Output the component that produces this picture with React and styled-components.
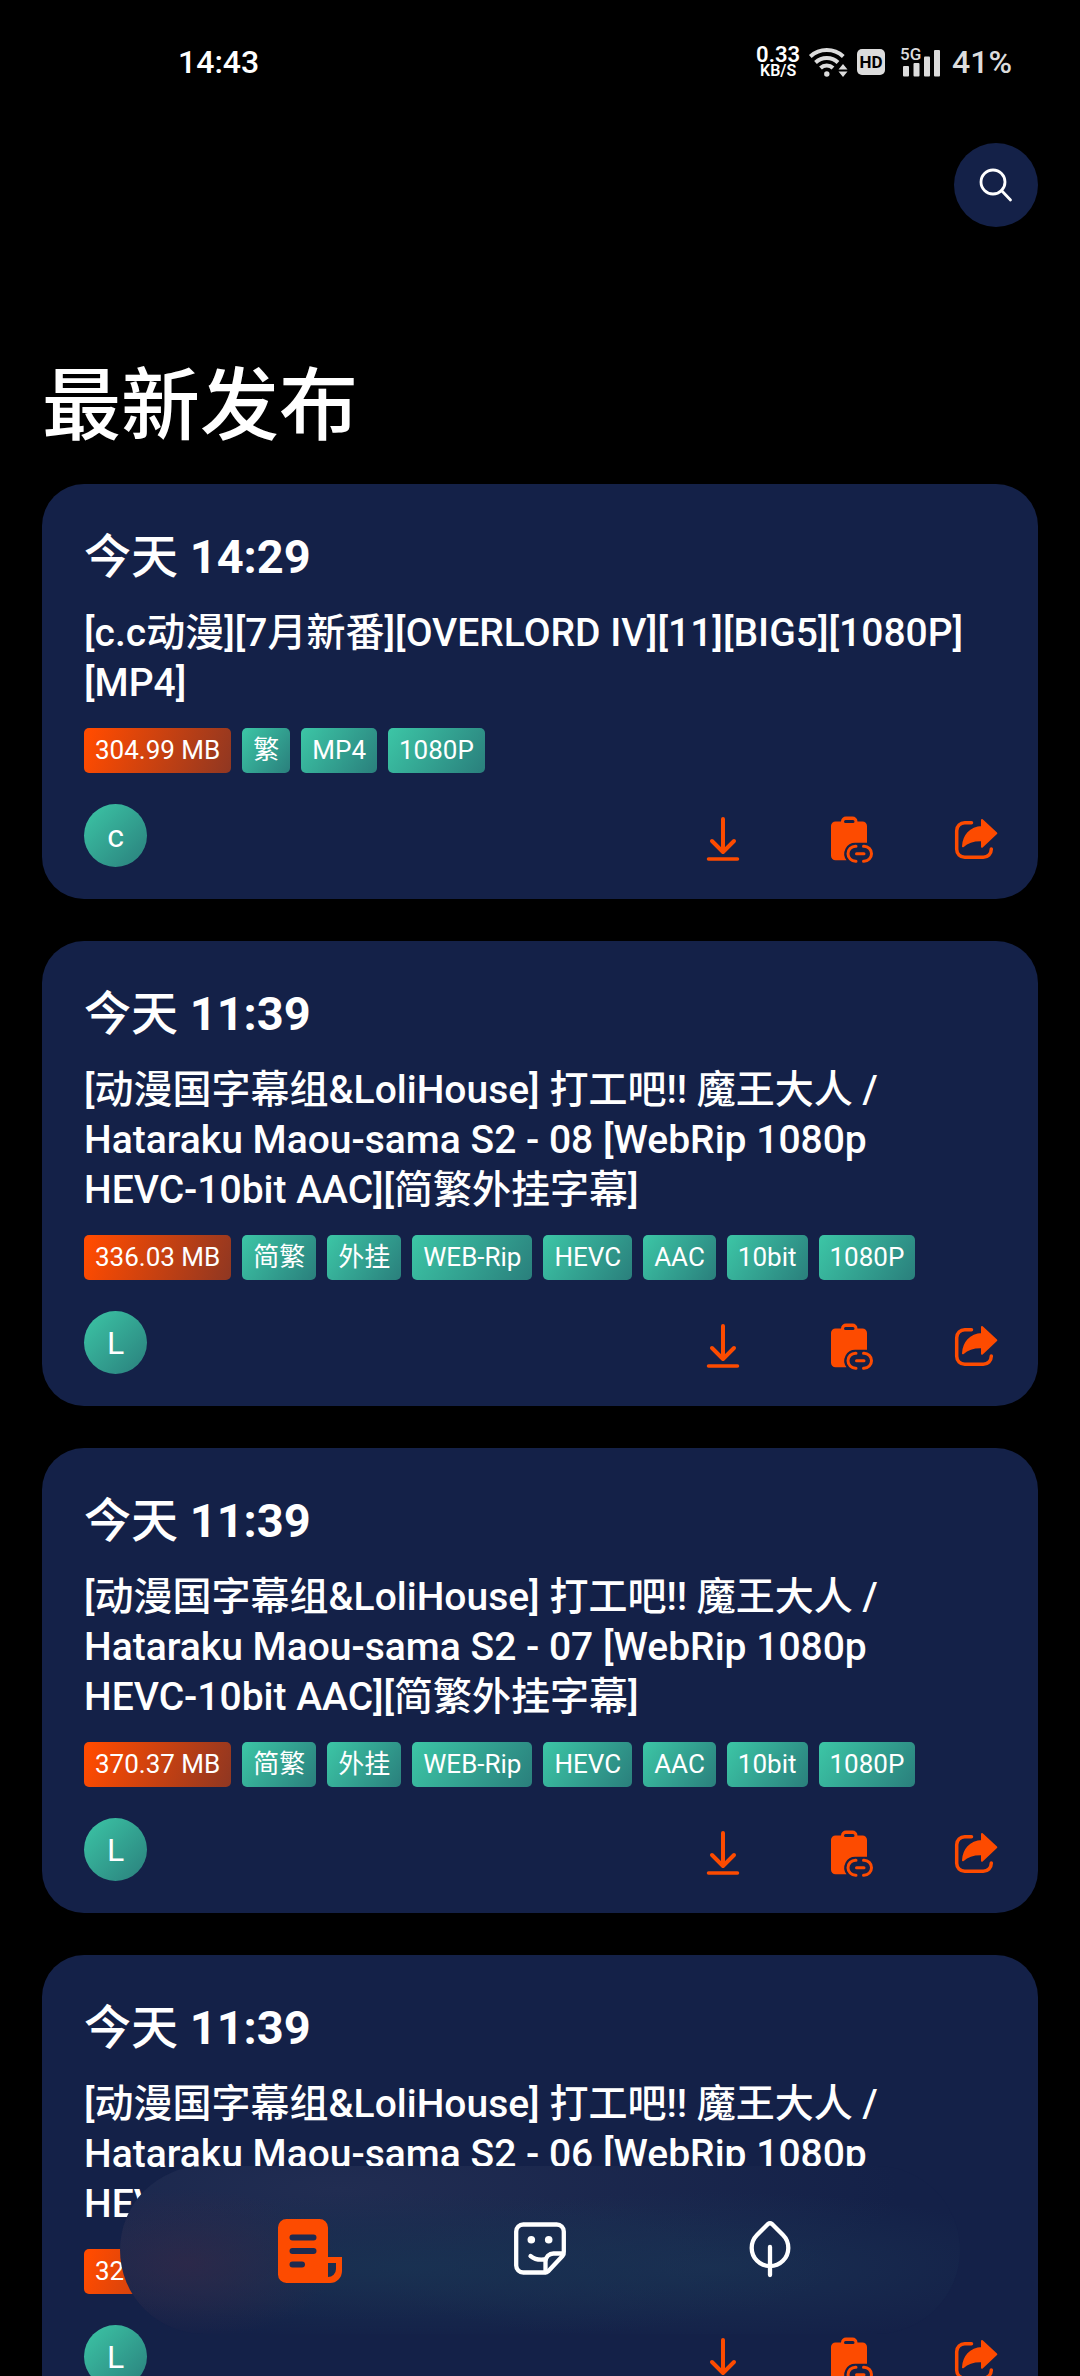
import React from "react";
import styled, { createGlobalStyle } from "styled-components";

const GlobalStyle = createGlobalStyle`
  *, *::before, *::after { box-sizing: border-box; }
  body {
    margin: 0;
    background: #000;
    color: #fff;
    font-family: Roboto, "Noto Sans CJK SC", sans-serif;
  }
`;

const Screen = styled.div`
  height: 100vh;
  overflow-x: hidden;
  overflow-y: auto;
  scrollbar-width: none;
  background: #000;
`;

const StatusBar = styled.div`
  display: flex;
  align-items: center;
  justify-content: space-between;
  height: 124px;
  padding: 0 68px 0 178px;
  font-size: 32px;
  font-weight: 500;
  line-height: 40px;
`;

const StatusIcons = styled.div`
  display: flex;
  align-items: center;
  gap: 12px;
  color: #dcdcdc;
`;

const NetSpeed = styled.div`
  display: flex;
  flex-direction: column;
  align-items: center;
  color: #fff;
  font-size: 22px;
  font-weight: 600;
  line-height: 18px;
`;

const SpeedUnit = styled.span`
  font-size: 16px;
  line-height: 14px;
`;

const Glyph = styled.svg`
  display: block;
  flex: none;
  overflow: visible;
  width: ${(p) => p.$w}px;
  height: ${(p) => p.$h}px;
`;

const SvgLabel = styled.text`
  font-family: Roboto, sans-serif;
  font-weight: ${(p) => p.$weight};
  font-size: ${(p) => p.$size}px;
`;

const AppBar = styled.header`
  display: flex;
  justify-content: flex-end;
  padding: 19px 42px;
`;

const IconButton = styled.button`
  display: flex;
  align-items: center;
  justify-content: center;
  padding: 0;
  border: 0;
  background: none;
  color: inherit;
  cursor: pointer;
`;

const SearchButton = styled(IconButton)`
  width: 84px;
  height: 84px;
  border-radius: 50%;
  background: #142148;
`;

const PageTitle = styled.h1`
  margin: 114px 42px 30px;
  font-size: 79px;
  font-weight: 500;
  line-height: 94px;
`;

const Feed = styled.main`
  display: flex;
  flex-direction: column;
  gap: 42px;
  padding: 0 42px 252px;
`;

const Card = styled.article`
  padding: 42px 42px 32px;
  border-radius: 42px;
  background: #142148;
`;

const PublishTime = styled.time`
  display: block;
  font-size: 47px;
  font-weight: 700;
  line-height: 62px;
`;

const Day = styled.span`
  font-weight: 500;
`;

const ItemTitle = styled.h2`
  margin: 20px 0;
  padding-right: 16px;
  font-size: 39px;
  font-weight: 500;
  line-height: 50px;
`;

const Tags = styled.div`
  display: flex;
  flex-wrap: wrap;
  gap: 11px;
`;

const Tag = styled.span`
  height: 45px;
  padding: 0 11px;
  border-radius: 5px;
  background: ${(p) =>
    p.$size
      ? "linear-gradient(110deg, #ff4b00 5%, #8f3722 100%)"
      : "linear-gradient(125deg, #3cc6a6 0%, #2a7f7c 100%)"};
  font-size: 26px;
  line-height: 45px;
  white-space: nowrap;
`;

const CardFooter = styled.div`
  display: flex;
  align-items: center;
  justify-content: space-between;
  margin-top: 31px;
`;

const Avatar = styled.span`
  display: flex;
  align-items: center;
  justify-content: center;
  width: 63px;
  height: 63px;
  border-radius: 50%;
  background: linear-gradient(135deg, #3cc6a6 0%, #2a7f7c 100%);
  font-size: 32px;
  line-height: 40px;
`;

const Actions = styled.div`
  display: flex;
  gap: 82px;
  color: #fd4b00;
`;

const NavBar = styled.nav`
  position: fixed;
  right: 120px;
  bottom: 42px;
  left: 120px;
  display: flex;
  height: 168px;
  padding: 0 75px;
  border-radius: 84px;
  background:
    radial-gradient(ellipse 150px 75px at 8% 58%, rgba(48, 40, 72, 0.8), rgba(48, 40, 72, 0)),
    radial-gradient(ellipse 420px 74px at 35% 60%, rgba(25, 50, 82, 0.9), rgba(25, 50, 82, 0)),
    radial-gradient(ellipse 340px 76px at 70% 60%, rgba(26, 48, 82, 0.9), rgba(26, 48, 82, 0)),
    radial-gradient(ellipse 560px 130px at 26% 14%, rgba(33, 45, 82, 1), rgba(33, 45, 82, 0)),
    #142148;
`;

const NavItem = styled(IconButton)`
  flex: 1;
  color: ${(p) => (p.$active ? "#fd4b00" : "#fff")};
`;

const WifiIcon = () => (
  <Glyph $w={33} $h={30} viewBox="3 0 33 30" fill="none" stroke="currentColor" strokeWidth="4">
    <path d="M1.3 9.5a24.500 24.500 0 0 1 33 0" />
    <path d="M6.500 15.500a16.500 16.500 0 0 1 22.500 0" />
    <path d="M11.500 21a9 9 0 0 1 12.500 0" />
    <circle cx="17.800" cy="27" r="2.700" fill="currentColor" stroke="none" />
    <path d="M29.500 22.500L34 17l4.500 5.500zM29.500 24.500L34 30l4.500-5.500z" fill="currentColor" stroke="none" />
  </Glyph>
);

const HdIcon = () => (
  <Glyph $w={28} $h={26} viewBox="0 0 28 26">
    <rect width="28" height="26" rx="5" fill="currentColor" />
    <SvgLabel $weight={700} $size={17} x="14" y="19" textAnchor="middle" fill="#000">HD</SvgLabel>
  </Glyph>
);

const SignalIcon = () => (
  <Glyph $w={43} $h={30} viewBox="-3 0 43 30" fill="currentColor">
    <SvgLabel $weight={500} $size={17} x="0" y="13">5G</SvgLabel>
    <rect x="3" y="19" width="6" height="10.500" rx="1" />
    <rect x="13.500" y="16" width="6" height="13.500" rx="1" />
    <rect x="24" y="9.500" width="6" height="20" rx="1" />
    <rect x="34" y="3" width="6" height="26.500" rx="1" />
  </Glyph>
);

const SearchIcon = () => (
  <Glyph $w={34} $h={34} viewBox="0 0 34 34" fill="none" stroke="currentColor" strokeWidth="2.800" strokeLinecap="round">
    <circle cx="14" cy="14" r="12" />
    <path d="M22.500 22.500L31.500 32" />
  </Glyph>
);

const DownloadIcon = () => (
  <Glyph $w={42} $h={56} viewBox="0 0 42 56" fill="none" stroke="currentColor" strokeWidth="4" strokeLinecap="round" strokeLinejoin="round">
    <path d="M17 11V43.500M6 33L17 44L28 33" />
    <path d="M2.500 51H31.500" strokeWidth="3.500" />
  </Glyph>
);

const CopyLinkIcon = () => (
  <Glyph $w={42} $h={56} viewBox="0 0 42 56" fill="none" stroke="currentColor" strokeWidth="3" strokeLinecap="round">
    <path
      d="M5.500 13.500H11a5 5 0 0 1 5-5H22.500a5 5 0 0 1 5 5H32.500a4.500 4.500 0 0 1 4.500 4.500V34.700H25.500a11 11 0 0 0-9 17.600H5.500a4.500 4.500 0 0 1-4.500-4.500V18a4.500 4.500 0 0 1 4.500-4.500zM15.500 12a1.500 1.500 0 0 0 0 3H23a1.500 1.500 0 0 0 0-3z"
      fill="currentColor"
      stroke="none"
      fillRule="evenodd"
    />
    <path d="M26 38.200H25.500a7.500 7.500 0 0 0 0 15H26M33.500 38.200H34a7.500 7.500 0 0 1 0 15H33.500M26.500 45.700H34" />
  </Glyph>
);

const ShareIcon = () => (
  <Glyph $w={42} $h={56} viewBox="0 0 42 56" fill="none" stroke="currentColor" strokeWidth="3.500" strokeLinecap="round" strokeLinejoin="round">
    <path d="M17.500 14.700H10.700a8 8 0 0 0-8 8V41.300a8 8 0 0 0 8 8H29.300a8 8 0 0 0 8-8V41" />
    <path d="M28 12L42.300 25.300L28 38.700V32.300C19.500 32 14 33.500 9 38.300C9.500 28 16 19.500 28 19z" fill="currentColor" strokeWidth="2" />
  </Glyph>
);

const NewsIcon = () => (
  <Glyph $w={72} $h={72} viewBox="0 0 72 72" fill="currentColor">
    <path d="M12.500 5H45.500a8.500 8.500 0 0 1 8.500 8.500V43H68V57a12 12 0 0 1-12 12H12.500A8.500 8.500 0 0 1 4 60.500V13.500A8.500 8.500 0 0 1 12.500 5zM54 49V63a8 8 0 0 0 8-8V49z" fillRule="evenodd" />
    <path d="M18.500 23.500H39.500M18.500 37H39.500M18.500 50.500H28" fill="none" stroke="#1d2b50" strokeWidth="6" strokeLinecap="round" />
  </Glyph>
);

const StickerIcon = () => (
  <Glyph $w={72} $h={72} viewBox="0 0 72 72" fill="none" stroke="currentColor" strokeWidth="4.300" strokeLinecap="round" strokeLinejoin="round">
    <path d="M59.800 38V17.500a7 7 0 0 0-7-7H19.200a7 7 0 0 0-7 7V51.500a7 7 0 0 0 7 7H41a4 4 0 0 0 3-1L58.500 42a5 5 0 0 0 1.300-4z" />
    <path d="M59 39.500H49.500a8 8 0 0 0-8 8V58" />
    <path d="M26.500 42Q32 46.500 40 45.500" />
    <circle cx="27.300" cy="25.700" r="3.800" fill="currentColor" stroke="none" />
    <circle cx="44.700" cy="25.700" r="3.800" fill="currentColor" stroke="none" />
  </Glyph>
);

const LeafIcon = () => (
  <Glyph $w={72} $h={72} viewBox="0 0 72 72" fill="none" stroke="currentColor" strokeWidth="4.300" strokeLinecap="round" strokeLinejoin="round">
    <path d="M34 10L23 21A18.300 18.300 0 1 0 49 21L38 10Q36 8.500 34 10z" />
    <path d="M36 33V61" />
  </Glyph>
);

const webRipTags = ["简繁", "外挂", "WEB-Rip", "HEVC", "AAC", "10bit", "1080P"];
const maouTitle = (episode) =>
  `[动漫国字幕组&LoliHouse] 打工吧!! 魔王大人 / Hataraku Maou-sama S2 - ${episode} [WebRip 1080p HEVC-10bit AAC][简繁外挂字幕]`;

const releases = [
  {
    day: "今天",
    time: "14:29",
    title: "[c.c动漫][7月新番][OVERLORD IV][11][BIG5][1080P][MP4]",
    size: "304.99 MB",
    tags: ["繁", "MP4", "1080P"],
    team: "c",
  },
  { day: "今天", time: "11:39", title: maouTitle("08"), size: "336.03 MB", tags: webRipTags, team: "L" },
  { day: "今天", time: "11:39", title: maouTitle("07"), size: "370.37 MB", tags: webRipTags, team: "L" },
  { day: "今天", time: "11:39", title: maouTitle("06"), size: "327.42 MB", tags: webRipTags, team: "L" },
];

const ReleaseCard = ({ release }) => (
  <Card>
    <PublishTime>
      <Day>{release.day}</Day> {release.time}
    </PublishTime>
    <ItemTitle>{release.title}</ItemTitle>
    <Tags>
      <Tag $size>{release.size}</Tag>
      {release.tags.map((tag) => (
        <Tag key={tag}>{tag}</Tag>
      ))}
    </Tags>
    <CardFooter>
      <Avatar>{release.team}</Avatar>
      <Actions>
        <IconButton type="button" aria-label="下载"><DownloadIcon /></IconButton>
        <IconButton type="button" aria-label="复制链接"><CopyLinkIcon /></IconButton>
        <IconButton type="button" aria-label="分享"><ShareIcon /></IconButton>
      </Actions>
    </CardFooter>
  </Card>
);

export default function App() {
  return (
    <>
      <GlobalStyle />
      <Screen lang="zh-CN">
        <StatusBar>
          <span>14:43</span>
          <StatusIcons>
            <NetSpeed>
              0.33
              <SpeedUnit>KB/S</SpeedUnit>
            </NetSpeed>
            <WifiIcon />
            <HdIcon />
            <SignalIcon />
            <span>41%</span>
          </StatusIcons>
        </StatusBar>
        <AppBar>
          <SearchButton type="button" aria-label="搜索"><SearchIcon /></SearchButton>
        </AppBar>
        <PageTitle>最新发布</PageTitle>
        <Feed>
          {releases.map((release, index) => (
            <ReleaseCard key={index} release={release} />
          ))}
        </Feed>
      </Screen>
      <NavBar>
        <NavItem type="button" $active aria-label="最新发布"><NewsIcon /></NavItem>
        <NavItem type="button" aria-label="番组"><StickerIcon /></NavItem>
        <NavItem type="button" aria-label="我的"><LeafIcon /></NavItem>
      </NavBar>
    </>
  );
}
